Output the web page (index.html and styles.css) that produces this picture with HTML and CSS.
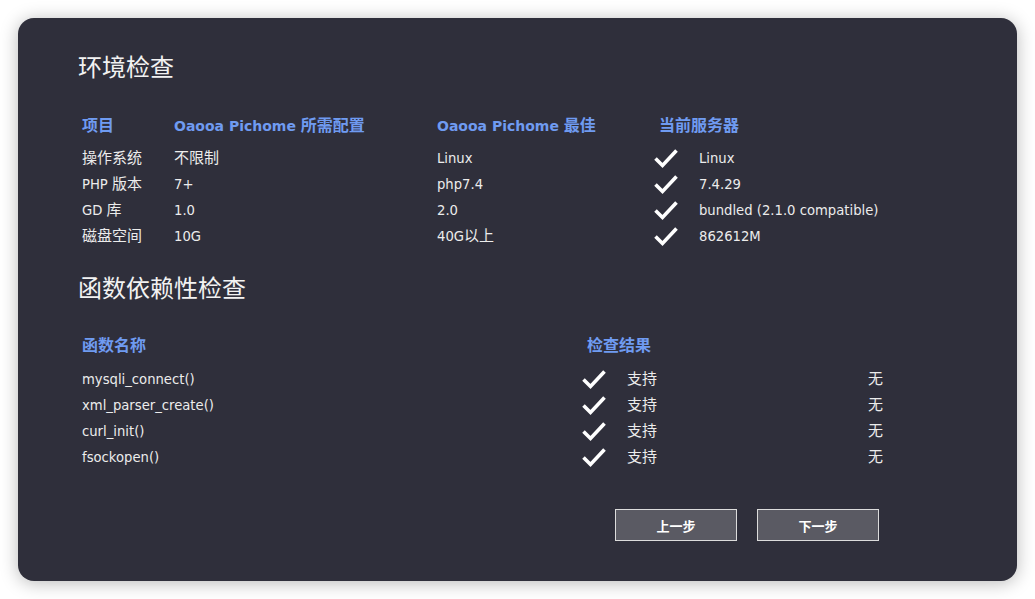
FILE: index.html
```html
<!DOCTYPE html>
<html lang="zh">
<head>
<meta charset="utf-8">
<title>环境检查</title>
<link rel="stylesheet" href="styles.css">
</head>
<body>
<div class="card">
  <h2 class="title">环境检查</h2>
  <div class="env head">
    <div><span class="zh">项目</span></div>
    <div>Oaooa Pichome <span class="zh">所需配置</span></div>
    <div>Oaooa Pichome <span class="zh">最佳</span></div>
    <div class="span2"><span class="zh">当前服务器</span></div>
  </div>
  <div class="env rows">
    <div><span class="zh">操作系统</span></div><div><span class="zh">不限制</span></div><div>Linux</div>
    <div class="ok"><svg viewBox="0 0 24 20" width="24" height="20"><polyline points="1.5,9.5 8.5,16.5 22.5,1.5"/></svg></div><div>Linux</div>
    <div>PHP <span class="zh">版本</span></div><div>7+</div><div>php7.4</div>
    <div class="ok"><svg viewBox="0 0 24 20" width="24" height="20"><polyline points="1.5,9.5 8.5,16.5 22.5,1.5"/></svg></div><div>7.4.29</div>
    <div>GD <span class="zh">库</span></div><div>1.0</div><div>2.0</div>
    <div class="ok"><svg viewBox="0 0 24 20" width="24" height="20"><polyline points="1.5,9.5 8.5,16.5 22.5,1.5"/></svg></div><div>bundled (2.1.0 compatible)</div>
    <div><span class="zh">磁盘空间</span></div><div>10G</div><div>40G<span class="zh">以上</span></div>
    <div class="ok"><svg viewBox="0 0 24 20" width="24" height="20"><polyline points="1.5,9.5 8.5,16.5 22.5,1.5"/></svg></div><div>862612M</div>
  </div>

  <h2 class="title title2">函数依赖性检查</h2>
  <div class="fn head">
    <div><span class="zh">函数名称</span></div>
    <div class="span3"><span class="zh">检查结果</span></div>
  </div>
  <div class="fn rows">
    <div>mysqli_connect()</div>
    <div class="ok"><svg viewBox="0 0 24 20" width="24" height="20"><polyline points="1.5,9.5 8.5,16.5 22.5,1.5"/></svg></div>
    <div><span class="zh">支持</span></div><div><span class="zh">无</span></div>
    <div>xml_parser_create()</div>
    <div class="ok"><svg viewBox="0 0 24 20" width="24" height="20"><polyline points="1.5,9.5 8.5,16.5 22.5,1.5"/></svg></div>
    <div><span class="zh">支持</span></div><div><span class="zh">无</span></div>
    <div>curl_init()</div>
    <div class="ok"><svg viewBox="0 0 24 20" width="24" height="20"><polyline points="1.5,9.5 8.5,16.5 22.5,1.5"/></svg></div>
    <div><span class="zh">支持</span></div><div><span class="zh">无</span></div>
    <div>fsockopen()</div>
    <div class="ok"><svg viewBox="0 0 24 20" width="24" height="20"><polyline points="1.5,9.5 8.5,16.5 22.5,1.5"/></svg></div>
    <div><span class="zh">支持</span></div><div><span class="zh">无</span></div>
  </div>

  <div class="actions">
    <button class="btn" type="button">上一步</button>
    <button class="btn" type="button">下一步</button>
  </div>
</div>
</body>
</html>
```

FILE: styles.css
```css
html, body {
  margin: 0;
  padding: 0;
  background: #ffffff;
}

body {
  font-family: "DejaVu Sans", "Noto Sans CJK SC", sans-serif;
  font-size: 13.2px;
  color: #ececec;
}

.card {
  box-sizing: border-box;
  margin: 18px;
  width: 999px;
  height: 563px;
  background: #2f2f3b;
  border-radius: 16px;
  box-shadow: 0 2px 18px rgba(0, 0, 0, 0.28);
  padding: 32px 0 0 60px;
}

.title {
  margin: 0;
  font-family: "Noto Sans CJK SC", sans-serif;
  font-weight: 400;
  font-size: 24px;
  line-height: 32px;
  color: #f2f2f2;
}

.title2 {
  margin-top: 21px;
}

.zh {
  font-family: "Noto Sans CJK SC", sans-serif;
  font-size: 15px;
  line-height: 1;
}

.env, .fn {
  display: grid;
  grid-auto-rows: 26px;
  margin-left: 4px;
  line-height: 26px;
}

.env > div, .fn > div {
  height: 26px;
  white-space: nowrap;
}

.env {
  grid-template-columns: 92px 263px 217px 45px auto;
  width: 801px;
}

.fn {
  grid-template-columns: 500px 45px 1fr auto;
  width: 801px;
}

.head {
  color: #6f9bf1;
  font-weight: 700;
  font-size: 14px;
  margin-top: 31px;
  margin-bottom: 7px;
}

.head .zh {
  font-size: 16px;
  font-weight: 700;
}

.fn.head {
  margin-top: 30px;
  margin-bottom: 8px;
}

.span2 {
  grid-column: span 2;
  padding-left: 5px;
}

.span3 {
  grid-column: span 3;
  padding-left: 5px;
}

.ok {
  display: flex;
  align-items: center;
}

.ok svg {
  display: block;
  fill: none;
  stroke: #ffffff;
  stroke-width: 3.6;
  stroke-linecap: butt;
  stroke-linejoin: miter;
}

.actions {
  display: flex;
  justify-content: flex-end;
  gap: 20px;
  width: 797px;
  margin-left: 4px;
  margin-top: 38px;
}

.btn {
  box-sizing: border-box;
  width: 122px;
  height: 32px;
  background: #5a5a63;
  border: 1px solid #dcdcdc;
  border-radius: 0;
  color: #ffffff;
  font-family: "Noto Sans CJK SC", sans-serif;
  font-weight: 700;
  font-size: 13px;
  padding: 0;
}
```
